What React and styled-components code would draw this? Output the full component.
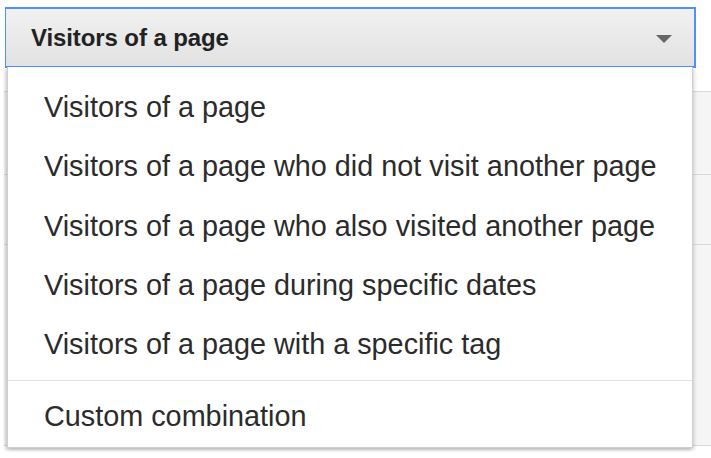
import React from 'react';
import styled, { createGlobalStyle } from 'styled-components';

const GlobalStyle = createGlobalStyle`
  html, body {
    margin: 0;
    padding: 0;
    background: #fff;
    font-family: "Liberation Sans", Arial, sans-serif;
  }
`;

const options = [
  'Visitors of a page',
  'Visitors of a page who did not visit another page',
  'Visitors of a page who also visited another page',
  'Visitors of a page during specific dates',
  'Visitors of a page with a specific tag',
];

function App() {
  return (
    <Page>
      <GlobalStyle />
      <SelectButton>
        <span>Visitors of a page</span>
        <Caret />
      </SelectButton>

      <Backdrop>
        <BackRow height={83} />
        <BackRow height={70} />
        <BackRow height={201} />
      </Backdrop>

      <Menu>
        {options.map((o) => (
          <MenuItem key={o}>{o}</MenuItem>
        ))}
        <Separator />
        <MenuItem>Custom combination</MenuItem>
      </Menu>
    </Page>
  );
}

const Page = styled.div`
  position: relative;
  width: 711px;
  height: 458px;
  overflow: hidden;
  padding: 7px 0 0 5px;
  box-sizing: border-box;
`;

const SelectButton = styled.div`
  display: flex;
  align-items: center;
  justify-content: space-between;
  box-sizing: border-box;
  width: 691px;
  height: 61px;
  padding: 0 22px 0 25px;
  border: 2px solid #4d90fe;
  border-width: 2px 2px 2px 1.5px;
  background: linear-gradient(#f1f1f1, #e2e2e2);
  color: #222;
  font-size: 24px;
  font-weight: bold;
  letter-spacing: -0.1px;
`;

const Caret = styled.div`
  width: 0;
  height: 0;
  margin-top: 3px;
  border-left: 8px solid transparent;
  border-right: 8px solid transparent;
  border-top: 8px solid #666;
`;

const Backdrop = styled.div`
  margin: 23px 0 0 -1px;
  width: 740px;
  background: #f5f5f5;
  border-top: 1px solid #d9d9d9;
`;

const BackRow = styled.div`
  height: ${(p) => p.height}px;
  border-bottom: 1px solid #d9d9d9;
  box-sizing: border-box;
`;

const Menu = styled.div`
  position: absolute;
  top: 67px;
  left: 7px;
  width: 686px;
  box-sizing: border-box;
  padding: 11px 0 0;
  height: 381px;
  background: #fff;
  border: 1px solid #cfcfcf;
  border-top: none;
  box-shadow: -2px 2px 3px rgba(0, 0, 0, 0.18), 2px 2px 3px rgba(0, 0, 0, 0.12);
`;

const MenuItem = styled.div`
  height: 59.3px;
  line-height: 59.3px;
  padding-left: 36px;
  font-size: 28.8px;
  color: #2b2b2b;
  white-space: nowrap;
`;

const Separator = styled.div`
  height: 1px;
  margin: 6px 0 6px;
  background: #e3e3e3;
`;

export default App;
